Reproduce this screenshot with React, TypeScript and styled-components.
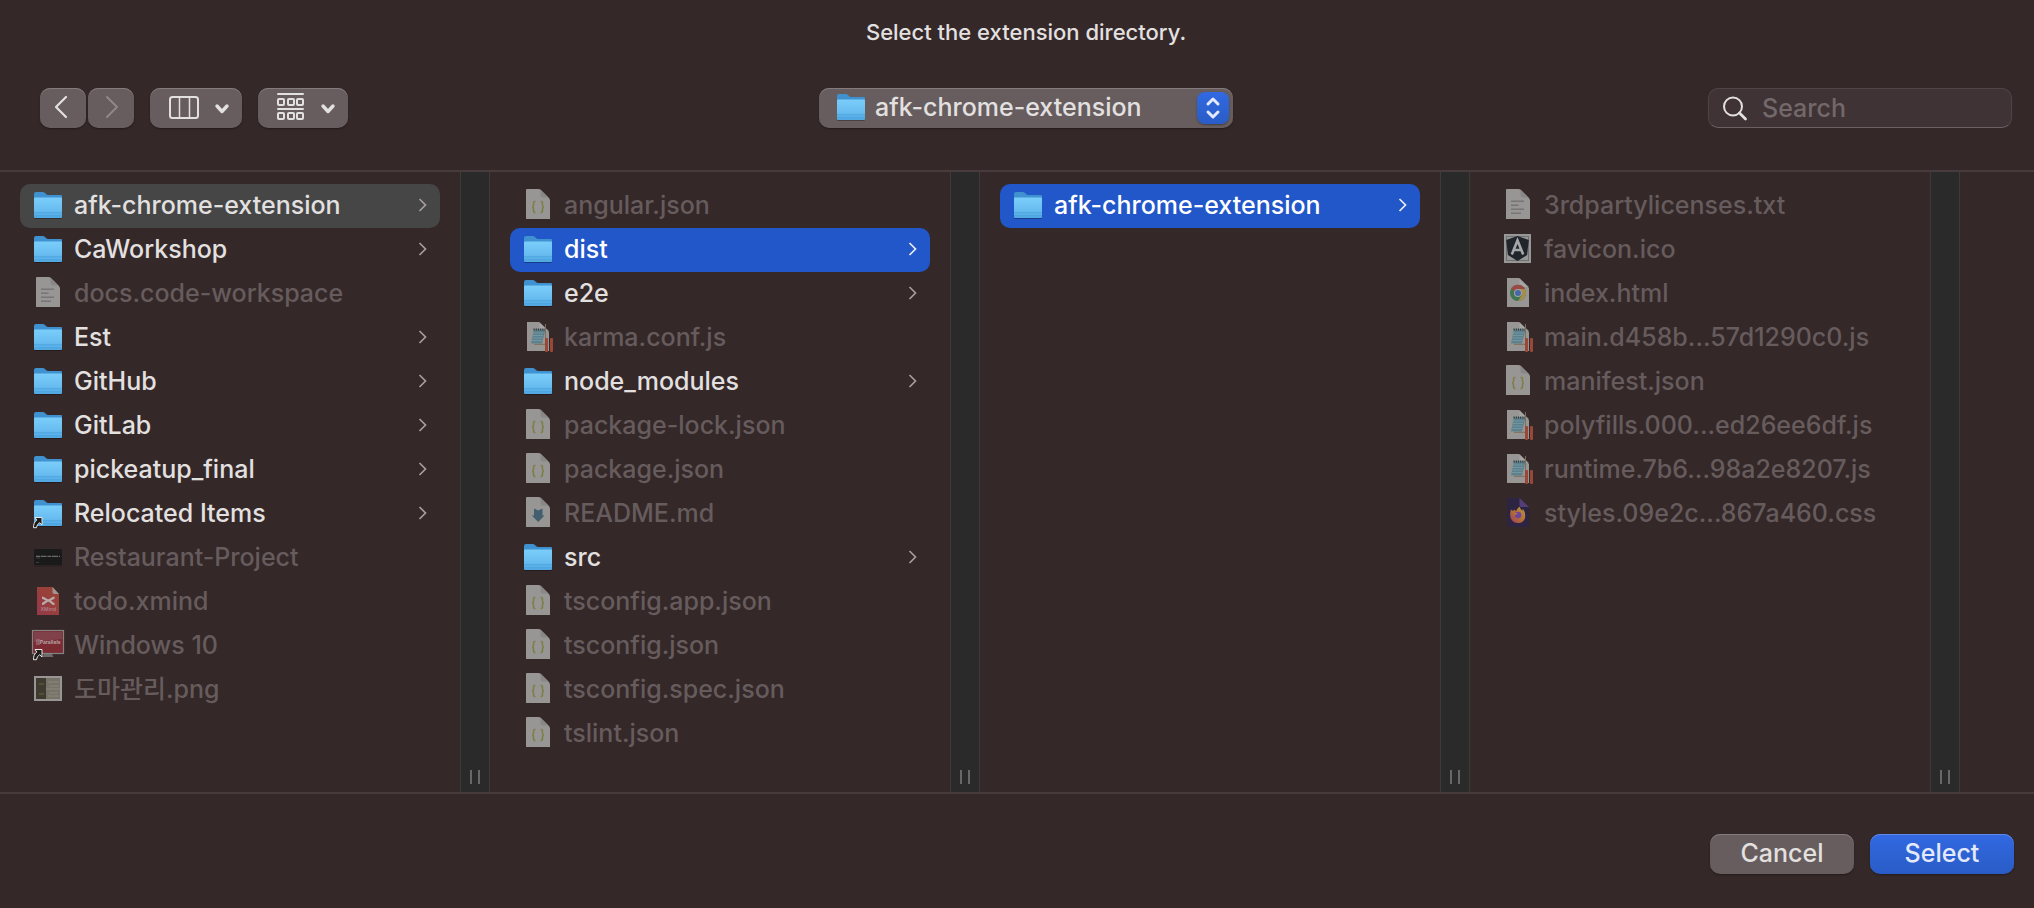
import React from 'react';
import styled, { createGlobalStyle, css } from 'styled-components';

const color = {
  window: '#352829',
  line: '#483b3d',
  gutter: '#2a2a2a',
  gutterEdge: '#3d3a3a',
  control: '#675d5e',
  text: '#e3e0e0',
  dim: '#665c5d',
  blue: '#2257c9',
  grey: '#464646',
  chevron: '#a59d9e',
  paper: '#979695',
};

const GlobalStyle = createGlobalStyle`
  * { box-sizing: border-box; }
  body { margin: 0; background: ${color.window}; }
  body, button, input, select {
    font-family: Inter, "Noto Sans CJK KR", sans-serif;
    font-size: 25px;
    font-weight: 500;
  }
`;

const Dialog = styled.main`
  display: flex;
  flex-direction: column;
  min-height: 100vh;
  overflow: hidden;
  background: ${color.window};
  color: ${color.text};
`;

const Header = styled.header`
  padding: 18px 22px 42px 40px;
  border-bottom: 2px solid ${color.line};
`;

const Title = styled.h1`
  margin: 0 0 42px;
  font-size: 22px;
  line-height: 28px;
  font-weight: 500;
  text-align: center;
`;

const Toolbar = styled.div`
  display: grid;
  grid-template-columns: 1fr 414px 1fr;
  align-items: center;
`;

const ToolGroup = styled.div`
  display: flex;
  gap: 16px;
`;

const NavPair = styled.div`
  display: flex;
  gap: 2px;
`;

const raised = css`
  border: 0;
  border-radius: 10px;
  background: ${color.control};
  box-shadow: inset 0 1px 0 #847b7c, 0 1px 2px rgba(0, 0, 0, 0.35);
`;

const ToolButton = styled.button`
  ${raised}
  display: flex;
  padding: 0;
  color: ${color.text};
  &:disabled { color: #8f8788; }
`;

const PathPicker = styled.div`
  position: relative;
  display: flex;
  height: 40px;
`;

const PathSelect = styled.select`
  ${raised}
  appearance: none;
  flex: 1;
  padding: 0 48px 2px 56px;
  line-height: 36px;
  color: ${color.text};
`;

const PathFolder = styled.span`
  position: absolute;
  left: 14px;
  top: 2px;
  display: flex;
  pointer-events: none;
`;

const PathArrows = styled.span`
  position: absolute;
  right: 4px;
  top: 4px;
  display: flex;
  border-radius: 8px;
  background: linear-gradient(#3269e2, #295cc6);
  box-shadow: 0 1px 2px rgba(0, 0, 0, 0.35);
  color: #e4eafb;
  pointer-events: none;
`;

const SearchBox = styled.label`
  display: flex;
  align-items: center;
  justify-self: end;
  width: 304px;
  height: 40px;
  padding-left: 12px;
  gap: 13px;
  border: 1px solid #504446;
  border-bottom-color: #6c6062;
  border-radius: 10px;
  background: #3f3335;
`;

const SearchInput = styled.input`
  flex: 1;
  min-width: 0;
  padding: 0;
  border: 0;
  outline: 0;
  background: transparent;
  color: ${color.text};
  &::placeholder { color: #73686a; opacity: 1; }
`;

const Browser = styled.div`
  display: flex;
  flex: 1;
  overflow: hidden;
`;

const Column = styled.section`
  flex: none;
  display: flex;
  width: 490px;
`;

const List = styled.ul`
  flex: 1;
  margin: 0;
  padding: 12px 20px;
  list-style: none;
`;

type Highlight = 'none' | 'path' | 'active';
const rowFill: Record<Highlight, string> = {
  none: 'transparent',
  path: color.grey,
  active: color.blue,
};

const Row = styled.button<{ $highlight: Highlight }>`
  display: flex;
  align-items: center;
  width: 100%;
  height: 44px;
  padding: 0 10px;
  border: 0;
  border-radius: 10px;
  background: ${(p) => rowFill[p.$highlight]};
  color: ${(p) => (p.$highlight === 'active' ? '#ffffff' : color.text)};
  text-align: left;
  &:disabled { color: ${color.dim}; }
`;

const FileName = styled.span`
  flex: 1;
  padding: 0 0 2px 8px;
  line-height: 36px;
  white-space: nowrap;
`;

const Disclosure = styled.svg<{ $bright: boolean }>`
  flex: none;
  margin-bottom: 2px;
  color: ${(p) => (p.$bright ? '#e9eefa' : color.chevron)};
`;

const Gutter = styled.div`
  display: flex;
  align-items: flex-end;
  justify-content: center;
  gap: 6px;
  width: 30px;
  padding-bottom: 8px;
  border: solid ${color.gutterEdge};
  border-width: 0 1px;
  background: ${color.gutter};
`;

const Grip = styled.span`
  width: 2px;
  height: 14px;
  background: #686868;
`;

const Footer = styled.footer`
  display: flex;
  justify-content: flex-end;
  gap: 16px;
  padding: 40px 20px 34px;
  border-top: 2px solid ${color.line};
`;

const ActionButton = styled.button<{ $primary?: boolean }>`
  ${raised}
  width: 144px;
  height: 40px;
  padding: 0 0 2px;
  line-height: 36px;
  color: ${color.text};
  ${(p) =>
    p.$primary &&
    css`
      background: linear-gradient(#3269e2, #295cc6);
      box-shadow: inset 0 1px 0 #5f8aea, 0 1px 2px rgba(0, 0, 0, 0.35);
      color: #e4eafb;
    `}
`;

type Kind =
  | 'folder' | 'alias' | 'text' | 'json' | 'js' | 'markdown' | 'terminal'
  | 'xmind' | 'windows' | 'image' | 'angular' | 'chrome' | 'firefox';

const AliasArrow = () => (
  <path
    d="M5 21.500h7v7.500l-2.300-2.300c-1.800 1-2.700 2.500-3.200 5H3.500c0-3.600.8-5.800 3.300-7.600z"
    fill="#1d1d1d" stroke="#e6e6e6" strokeWidth="1" strokeLinejoin="round"
  />
);

const Folder = () => (
  <>
    <rect x="4" y="8" width="28" height="23" rx="1.500" fill="#000" opacity="0.3" />
    <path d="M4 6q0-2 2-2h6.500q1.500 0 2.500 1l1.200 1.200q.8.8 2 .8H31q1 0 1 1v6H4z" fill="#3f92cf" />
    <path d="M4 10.500q0-1 1-1h26q1 0 1 1V29q0 1-1 1H5q-1 0-1-1z" fill="url(#folderFace)" />
    <path d="M4 24.800h28M4 27.800h28" stroke="#459fdc" strokeWidth="1" opacity="0.7" />
  </>
);

const Paper = () => (
  <>
    <path d="M6 2q0-1 1-1h11.500q1.500 0 2.500 1l7.500 7.500q1.500 1.500 1.500 3V31H6z" fill={color.paper} />
    <path d="M20.500 1.500v5.500q0 2.500 2.500 2.500h5.500z" fill="#7f7d7c" opacity="0.55" />
  </>
);

const SmallPaper = ({ fill = color.paper, fold = '#b3b1b0' }) => (
  <>
    <path d="M7 2h12l10 10v19H7z" fill={fill} />
    <path d="M19.500 2v7q0 2 2 2H29z" fill={fold} opacity="0.6" />
  </>
);

const art: Record<Kind, React.ReactNode> = {
  folder: <Folder />,
  alias: <><Folder /><AliasArrow /></>,
  text: (
    <>
      <Paper />
      <path d="M11 13.200h13M11 17.200h7.500M11 21.200h13M11 25.200h10" stroke="#777575" strokeWidth="1.500" />
    </>
  ),
  json: (
    <>
      <Paper />
      <path
        d="M15.500 13.500h-.6q-1.400 0-1.400 1.500v2.300q0 1.500-1.300 1.700 1.300.2 1.300 1.700V23q0 1.500 1.400 1.500h.6M20.500 13.500h.6q1.400 0 1.400 1.500v2.300q0 1.500 1.300 1.700-1.300.2-1.300 1.700V23q0 1.500-1.400 1.500h-.6"
        fill="none" stroke="#7f7f45" strokeWidth="1.600"
      />
    </>
  ),
  js: (
    <>
      <SmallPaper />
      <path d="M14 9.500h11.500l-3.500 14H11z" fill="#5d818c" />
      <path d="M13.500 13h10M13 15.500h10M12.500 18h10M12 20.500h10" stroke="#7297a3" strokeWidth="1" />
      <path d="M13.500 9.500h12" stroke="#30393c" strokeWidth="2" strokeDasharray="1.200 1" />
      <path d="M14 24.300h11M25.500 4v18" stroke="#7d6d5a" strokeWidth="1" />
      <rect x="25" y="18" width="3" height="14" rx="1" fill="#9b4738" />
      <rect x="30" y="18" width="3" height="14" rx="1" fill="#9b4738" />
    </>
  ),
  markdown: (
    <>
      <Paper />
      <path d="M14 12.500l4.200 2 4.300-2V19.500H24.500l-6.300 6.500-6.400-6.500H14z" fill="#435f6f" />
    </>
  ),
  terminal: (
    <>
      <rect x="4" y="9" width="28" height="18" rx="1" fill="#000" opacity="0.15" />
      <rect x="4" y="9" width="28" height="16" fill="#1a1a1a" />
      <path d="M6 16.300h24" stroke="#6b6b6b" strokeWidth="1.200" strokeDasharray="4 .6 6 .8" />
      <path d="M6 18h4M6 22.500h3" stroke="#3d3d3d" strokeWidth="1" />
    </>
  ),
  xmind: (
    <>
      <path d="M7 3h15.500l6.500 7v21H7z" fill="url(#xmindFace)" />
      <path d="M22.500 3v5q0 2 2 2H29z" fill="#a09494" />
      <path d="M12 13.800c3 0 3.500 2.700 6.300 2.700s3.200-2.700 6.200-2.700M12 20c3 0 3.500-3.500 6.300-3.500s3.200 3.500 6.200 3.500" fill="none" stroke="#b9a8aa" strokeWidth="2.400" />
      <text x="18.300" y="26.800" fontSize="5" textAnchor="middle" fill="#b08a90">XMind</text>
    </>
  ),
  windows: (
    <>
      <path d="M14 26h8l1.500 3h-11z" fill="#6c6a6a" />
      <rect x="2.500" y="2.500" width="31" height="23" fill="#7b2c33" stroke="#858283" strokeWidth="1.200" />
      <path d="M4 4h28v7L4 14z" fill="#81414a" />
      <text x="18.300" y="16.300" fontSize="5" fontWeight="700" textAnchor="middle" fill="#b5a2a5">||Parallels</text>
      <AliasArrow />
    </>
  ),
  image: (
    <>
      <rect x="4" y="4" width="28" height="25" fill="#979695" />
      <rect x="6" y="6" width="24" height="21" fill="#777368" />
      <rect x="6" y="6" width="10" height="21" fill="#3f3b30" />
      <path d="M9 12h5M9 22h5" stroke="#5c5832" strokeWidth="1.500" />
      <path d="M18 10h11M19 14h10M16 17h14M19 21h9M18 24h11" stroke="#858175" strokeWidth="1.500" />
    </>
  ),
  angular: (
    <>
      <rect x="4" y="2" width="27" height="29" fill="#979797" />
      <rect x="6.500" y="4.500" width="22" height="24" fill="none" stroke="#6f7072" />
      <path d="M17.500 4l11.300 4-1.700 15-9.600 6-9.600-6L6.200 8z" fill="#20242b" />
      <path d="M11.800 22.500l5.700-14 5.700 14M14 18h7" fill="none" stroke="#a5a6a8" strokeWidth="2.600" />
    </>
  ),
  chrome: (
    <>
      <SmallPaper />
      <circle cx="18" cy="17" r="8" fill="#3f7550" />
      <path d="M18 17L11 13A8 8 0 0 1 25.300 13.300z" fill="#994a43" />
      <path d="M18 13h7A8 8 0 0 1 18 25l4-6z" fill="#a58e4b" />
      <circle cx="18" cy="17" r="4" fill="#a3a3a3" />
      <circle cx="18" cy="17" r="3" fill="#4868a5" />
    </>
  ),
  firefox: (
    <>
      <SmallPaper fill="#2c2441" fold="#70509e" />
      <path d="M11 13.500l2 1.500 1.500-1.500 1.500 2c.8-2.500 2-4 4-4.800 0 2 1.200 2.800 2.300 4l.6-1.600C27 18 26 27 18 27S9 18.500 11 13.500z" fill="url(#flame)" />
      <circle cx="18" cy="19" r="3.300" fill="#6f4699" />
      <path d="M13.500 16.500l4 .8c-.5 1.500-2 1-2.500 2.200z" fill="#b37936" />
    </>
  ),
};

const Icon = ({ kind }: { kind: Kind }) => (
  <svg width="36" height="36" viewBox="0 0 36 36" aria-hidden="true">{art[kind]}</svg>
);

const GradientDefs = styled.svg`
  position: absolute;
`;

const Gradients = () => (
  <GradientDefs width="0" height="0" aria-hidden="true">
    <defs>
      <linearGradient id="folderFace" x2="0" y2="1">
        <stop offset="0" stopColor="#7bcefa" />
        <stop offset="0.6" stopColor="#69bdf0" />
        <stop offset="1" stopColor="#52a9e2" />
      </linearGradient>
      <linearGradient id="xmindFace" x1="1" x2="0" y2="1">
        <stop offset="0" stopColor="#9b4530" />
        <stop offset="1" stopColor="#95394a" />
      </linearGradient>
      <linearGradient id="flame" x1="1" x2="0" y2="1">
        <stop offset="0" stopColor="#b59a3c" />
        <stop offset="0.5" stopColor="#b5703a" />
        <stop offset="1" stopColor="#9c3d55" />
      </linearGradient>
    </defs>
  </GradientDefs>
);

interface Entry { name: string; kind: Kind; highlight?: Highlight }

const columns: { label: string; entries: Entry[] }[] = [
  {
    label: 'Projects',
    entries: [
      { name: 'afk-chrome-extension', kind: 'folder', highlight: 'path' },
      { name: 'CaWorkshop', kind: 'folder' },
      { name: 'docs.code-workspace', kind: 'text' },
      { name: 'Est', kind: 'folder' },
      { name: 'GitHub', kind: 'folder' },
      { name: 'GitLab', kind: 'folder' },
      { name: 'pickeatup_final', kind: 'folder' },
      { name: 'Relocated Items', kind: 'alias' },
      { name: 'Restaurant-Project', kind: 'terminal' },
      { name: 'todo.xmind', kind: 'xmind' },
      { name: 'Windows 10', kind: 'windows' },
      { name: '도마관리.png', kind: 'image' },
    ],
  },
  {
    label: 'afk-chrome-extension',
    entries: [
      { name: 'angular.json', kind: 'json' },
      { name: 'dist', kind: 'folder', highlight: 'active' },
      { name: 'e2e', kind: 'folder' },
      { name: 'karma.conf.js', kind: 'js' },
      { name: 'node_modules', kind: 'folder' },
      { name: 'package-lock.json', kind: 'json' },
      { name: 'package.json', kind: 'json' },
      { name: 'README.md', kind: 'markdown' },
      { name: 'src', kind: 'folder' },
      { name: 'tsconfig.app.json', kind: 'json' },
      { name: 'tsconfig.json', kind: 'json' },
      { name: 'tsconfig.spec.json', kind: 'json' },
      { name: 'tslint.json', kind: 'json' },
    ],
  },
  {
    label: 'dist',
    entries: [{ name: 'afk-chrome-extension', kind: 'folder', highlight: 'active' }],
  },
  {
    label: 'afk-chrome-extension build',
    entries: [
      { name: '3rdpartylicenses.txt', kind: 'text' },
      { name: 'favicon.ico', kind: 'angular' },
      { name: 'index.html', kind: 'chrome' },
      { name: 'main.d458b...57d1290c0.js', kind: 'js' },
      { name: 'manifest.json', kind: 'json' },
      { name: 'polyfills.000...ed26ee6df.js', kind: 'js' },
      { name: 'runtime.7b6...98a2e8207.js', kind: 'js' },
      { name: 'styles.09e2c...867a460.css', kind: 'firefox' },
    ],
  },
];

const EntryRow = ({ name, kind, highlight = 'none' }: Entry) => {
  const opens = kind === 'folder' || kind === 'alias';
  return (
    <li>
      <Row type="button" disabled={!opens} $highlight={highlight}>
        <Icon kind={kind} />
        <FileName>{name}</FileName>
        {opens && (
          <Disclosure $bright={highlight === 'active'} width="16" height="16" viewBox="0 0 16 16" aria-hidden="true">
            <path d="M5.500 2l6 6-6 6" fill="none" stroke="currentColor" strokeWidth="1.700" />
          </Disclosure>
        )}
      </Row>
    </li>
  );
};

const stroke = { fill: 'none', stroke: 'currentColor', strokeLinecap: 'round', strokeLinejoin: 'round' } as const;

export default function App() {
  return (
    <Dialog>
      <GlobalStyle />
      <Gradients />
      <Header>
        <Title>Select the extension directory.</Title>
        <Toolbar>
          <ToolGroup>
            <NavPair>
              <ToolButton type="button" aria-label="Back">
                <svg width="46" height="40" {...stroke}>
                  <path d="M26 9L16 19l10 10" strokeWidth="2.200" />
                </svg>
              </ToolButton>
              <ToolButton type="button" aria-label="Forward" disabled>
                <svg width="46" height="40" {...stroke}>
                  <path d="M19 9l10 10-10 10" strokeWidth="2" />
                </svg>
              </ToolButton>
            </NavPair>
            <ToolButton type="button" aria-label="Column view">
              <svg width="92" height="40" {...stroke}>
                <rect x="20" y="9" width="28" height="21" rx="2.500" strokeWidth="2" />
                <path d="M29.500 9v21M39.500 9v21" strokeWidth="1.500" />
                <path d="M67 18l5 5.500 5-5.500" strokeWidth="3.400" />
              </svg>
            </ToolButton>
            <ToolButton type="button" aria-label="Group items">
              <svg width="90" height="40" {...stroke}>
                <path d="M20 6h25M20 21h25" strokeWidth="2" />
                {[11, 25].map((y) =>
                  [20, 30, 39].map((x) => (
                    <rect key={`${x}-${y}`} x={x} y={y} width="6" height="6" rx="1" strokeWidth="2" />
                  )),
                )}
                <path d="M65 18l5 5.500 5-5.500" strokeWidth="3.400" />
              </svg>
            </ToolButton>
          </ToolGroup>
          <PathPicker>
            <PathSelect aria-label="Current folder" defaultValue="afk-chrome-extension">
              <option>afk-chrome-extension</option>
            </PathSelect>
            <PathFolder><Icon kind="folder" /></PathFolder>
            <PathArrows>
              <svg width="32" height="32" {...stroke} aria-hidden="true">
                <path d="M11 12l5-5 5 5M11 20l5 5 5-5" strokeWidth="3" />
              </svg>
            </PathArrows>
          </PathPicker>
          <SearchBox>
            <svg width="28" height="28" {...stroke} aria-hidden="true">
              <circle cx="12" cy="12.500" r="9" strokeWidth="2" />
              <path d="M18.500 19l6 6" strokeWidth="2.800" />
            </svg>
            <SearchInput type="search" placeholder="Search" aria-label="Search" />
          </SearchBox>
        </Toolbar>
      </Header>
      <Browser>
        {columns.map((column) => (
          <Column key={column.label} aria-label={column.label}>
            <List>
              {column.entries.map((entry) => (
                <EntryRow key={entry.name} {...entry} />
              ))}
            </List>
            <Gutter>
              <Grip />
              <Grip />
            </Gutter>
          </Column>
        ))}
      </Browser>
      <Footer>
        <ActionButton type="button">Cancel</ActionButton>
        <ActionButton type="button" $primary>Select</ActionButton>
      </Footer>
    </Dialog>
  );
}
